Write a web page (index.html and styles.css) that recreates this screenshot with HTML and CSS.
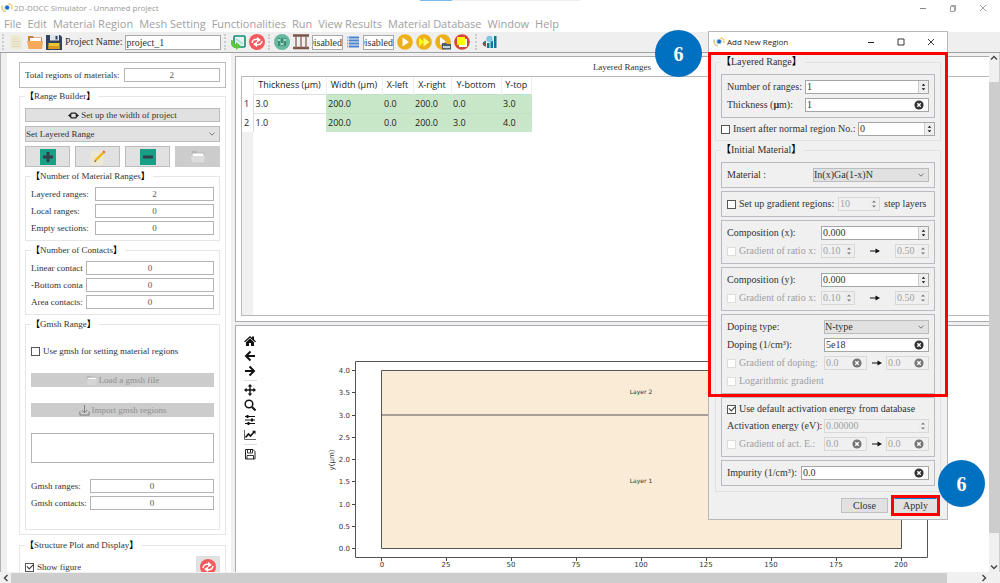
FILE: index.html
```html
<!DOCTYPE html>
<html lang="en">
<head>
<meta charset="utf-8">
<title>2D-DDCC Simulator - Unnamed project</title>
<link rel="stylesheet" href="styles.css">
</head>
<body>
<svg class="defs" aria-hidden="true">
  <symbol id="logo" viewBox="0 0 12 10"><path d="M1.5 2.5Q0 5 2 7.5L5 9" fill="none" stroke="#8fd3a0" stroke-width="1"/><path d="M1 3.5Q.5 6 3.5 8.5" fill="none" stroke="#f6c544" stroke-width="1.4" stroke-dasharray="1.5 .6"/><path d="M7.5 1Q11 1.500 11 4.500L10.500 6" fill="none" stroke="#f6c544" stroke-width="1.400" stroke-dasharray="2 .5"/><circle cx="6" cy="4.500" r="2.600" fill="#7fb6f0"/><circle cx="6.200" cy="4.500" r="1.700" fill="#1763c8"/></symbol>
  <symbol id="steps" viewBox="0 0 10 12"><path d="M3 4.500L5 2.500L7 4.500ZM3 7.500L5 9.500L7 7.500Z" fill="currentColor"/></symbol>
  <symbol id="clear" viewBox="0 0 10 10"><circle cx="5" cy="5" r="4.600" fill="currentColor"/><path d="M3.300 3.300L6.700 6.700M6.700 3.300L3.300 6.700" stroke="#fff" stroke-width="1.300"/></symbol>
  <symbol id="chevron" viewBox="0 0 8 8"><path d="M1.500 2.700L4 5.200L6.500 2.700" fill="none" stroke="#777" stroke-width="1"/></symbol>
  <symbol id="arrow" viewBox="0 0 10 8"><path d="M0 4H7" stroke="#111" stroke-width="1"/><path d="M5.500 1.500L10 4L5.500 6.500Z" fill="#111"/></symbol>
  <symbol id="refresh" viewBox="0 0 16 16"><circle cx="8" cy="8" r="8" fill="#f4595b"/><path d="M3 9Q3.500 4.500 9 5.500M13 7Q12.500 11.500 7 10.500" fill="none" stroke="#fff" stroke-width="1.500"/><path d="M8 2.800L12 6L8 8.500ZM8 13.200L4 10L8 7.500Z" fill="#fff"/></symbol>
</svg>

<header class="titlebar">
  <svg class="logo"><use href="#logo"/></svg>
  <h1>2D-DDCC Simulator - Unnamed project</h1>
  <div class="tab-hint"></div>
  <div class="window-buttons">
    <button aria-label="Minimize"><svg viewBox="0 0 10 10"><path d="M2 5.500H8" stroke="#888"/></svg></button>
    <button aria-label="Restore"><svg viewBox="0 0 10 10"><path d="M2.500 3.500H6.500V8.500H2.500ZM3.500 3V2.500H7.500V7.500H7" fill="none" stroke="#888" stroke-width=".8"/></svg></button>
    <button aria-label="Close window"><svg viewBox="0 0 10 10"><path d="M2 2L8 8M8 2L2 8" stroke="#888" stroke-width=".8"/></svg></button>
  </div>
</header>

<nav class="menu">
  <a href="#">File</a><a href="#">Edit</a><a href="#">Material Region</a><a href="#">Mesh Setting</a><a href="#">Functionalities</a><a href="#">Run</a><a href="#">View Results</a><a href="#">Material Database</a><a href="#">Window</a><a href="#">Help</a>
</nav>

<div class="toolbar">
  <span class="grip"></span>
  <button aria-label="New"><svg viewBox="0 0 16 16"><path d="M2.500 1H11L14 4V15H2.500Z" fill="#eeead2"/><path d="M4 5H10M4 7.500H12M4 10H12M4 12.500H12" stroke="#d9d5bc" stroke-width=".8"/></svg></button>
  <button aria-label="Open"><svg viewBox="0 0 16 16"><path d="M1 2H6L7 3.500H15V9H1Z" fill="#c9813b"/><path d="M3 4H14V8H3Z" fill="#fff"/><path d="M0 7H16L15 15H1.500Z" fill="#f5a95b"/></svg></button>
  <button aria-label="Save"><svg viewBox="0 0 16 16"><path d="M0 1H14L16 3V16H0Z" fill="#33415c"/><path d="M4 1H13V6.500H4Z" fill="#dfe5ea"/><path d="M9.500 2H11.500V5.500H9.500Z" fill="#33415c"/><path d="M2.500 9H13.500V15H2.500Z" fill="#f0c332"/><path d="M2.500 12H13.500V15H2.500Z" fill="#d79b22"/></svg></button>
  <label for="project">Project Name:</label>
  <input id="project" class="project-name" type="text" value="project_1">
  <span class="grip"></span>
  <button aria-label="Import project"><svg viewBox="0 0 16 16"><rect x="4" y="2" width="11" height="11" rx="1" fill="#e4f3ef" stroke="#168d74" stroke-width="1.600"/><path d="M6 5L9 7L13 10" stroke="#a8d6ca" stroke-width="1.500"/><path d="M1 6Q4 6 4 10H6V8L11 12L6 16V14Q0 14 1 6" fill="#5fc93b"/></svg></button>
  <button aria-label="Reload project"><svg><use href="#refresh"/></svg></button>
  <span class="grip"></span>
  <button aria-label="Parameters"><svg viewBox="0 0 16 16"><circle cx="8" cy="8" r="8" fill="#66b99f"/><path d="M5 4V12M8 4V12M11 4V12" stroke="#236b5a" stroke-width="1.200"/><path d="M4 6H6M7 10H9M10 6H12" stroke="#d6f3ea" stroke-width="1.300"/></svg></button>
  <button aria-label="Mesh"><svg viewBox="0 0 16 16"><path d="M0 1.500H16M0 14H16" stroke="#795548" stroke-width="2.400"/><path d="M3 2V14M8 2V14M13 2V14" stroke="#8b6c5e" stroke-width="1.400"/></svg></button>
  <input class="mode" type="text" value="Disabled" aria-label="Mesh mode">
  <button class="list" aria-label="Threads"><svg viewBox="0 0 14 16"><path d="M3 3.500H13M3 6.500H13M3 9.500H13M3 12.500H13" stroke="#4a86d0" stroke-width="2"/><path d="M1 3.500H2.500M1 6.500H2.500M1 9.500H2.500M1 12.500H2.500" stroke="#8fb8ea" stroke-width="2"/></svg></button>
  <input class="mode" type="text" value="Disabled" aria-label="Thread mode">
  <button aria-label="Run"><svg viewBox="0 0 16 16"><circle cx="8" cy="8" r="7.800" fill="#ecb019"/><path d="M5.500 3.500L12 8L5.500 12.500Z" fill="#fff"/></svg></button>
  <button aria-label="Run all"><svg viewBox="0 0 16 16"><circle cx="8" cy="8" r="7.800" fill="#ecb019"/><path d="M3 3.500L8 8L3 12.500Z" fill="#ff0"/><path d="M7.500 3.500L13.500 8L7.500 12.500Z" fill="#fdfd66"/></svg></button>
  <button aria-label="Run from file"><svg viewBox="0 0 16 16"><circle cx="8" cy="8" r="7.800" fill="#ecb019"/><path d="M5 3L11 7.500L5 11Z" fill="#fff"/><path d="M7 9H11L12 10H16V15.500H7Z" fill="#49606b"/><path d="M8 12H15V14H8Z" fill="#c6d7dd"/></svg></button>
  <button aria-label="Stop"><svg viewBox="0 0 16 16"><circle cx="8" cy="8" r="7.800" fill="#d6453b"/><path d="M5 5H13V13H5Z" fill="#fff"/><path d="M3 3H11V11H3Z" fill="#ff0"/></svg></button>
  <span class="grip last"></span>
  <button aria-label="Plot results"><svg viewBox="0 0 16 16"><path d="M6 9H8.500V14H6ZM9.500 7H12V14H9.500ZM13 2H15.500V14H13Z" fill="#0d7896"/><circle cx="8.500" cy="5" r="3.200" fill="#79cbe5"/><path d="M2 8L5 6.500V13L2 11Z" fill="#23869e"/><path d="M2 9L4.500 11.500" stroke="#954d2c" stroke-width="2"/></svg></button>
</div>

<main class="workspace">
  <div class="content">
    <aside class="side">
      <div class="frame total">
        <label for="total">Total regions of materials:</label><input id="total" value="2">
      </div>
      <fieldset class="builder">
        <legend><b>【</b>Range Builder<b>】</b></legend>
        <button class="wide"><svg viewBox="0 0 12 10"><rect x="3" y="2.500" width="6" height="5" rx="1" fill="none" stroke="#222" stroke-width="1.300"/><path d="M0 5L3 2.500V7.500ZM12 5L9 2.500V7.500Z" fill="#222"/></svg>Set up the width of project</button>
        <div class="combo"><select aria-label="Range type"><option>Set Layered Range</option></select><svg><use href="#chevron"/></svg></div>
        <div class="icon-row">
          <button aria-label="Add range"><svg viewBox="0 0 16 16"><path d="M0 0H16V16H0Z" fill="#17a085"/><path d="M8 3V13M3 8H13" stroke="#33404b" stroke-width="3"/></svg></button>
          <button aria-label="Edit range"><svg viewBox="0 0 18 18"><path d="M1 2H15V18H1Z" fill="#ece8d3"/><path d="M5 14.500L6 11L14 3L16 5L8 13Z" fill="#ecb71c"/><path d="M14 3L15.500 1.500L17.500 3.500L16 5Z" fill="#eb6254"/><path d="M5 14.500L5.500 12.500L7 14Z" fill="#444"/></svg></button>
          <button aria-label="Remove range"><svg viewBox="0 0 16 16"><path d="M0 0H16V16H0Z" fill="#17a085"/><path d="M3 8H13" stroke="#33404b" stroke-width="3"/></svg></button>
          <button class="off" aria-label="Load ranges" disabled><svg viewBox="0 0 18 18"><path d="M2 2H7L8 4H16V7H2Z" fill="#b5b5b5"/><path d="M3 5H15V8H3Z" fill="#fff"/><path d="M1 8H17L16 15H2Z" fill="#dcdcdc"/></svg></button>
        </div>
        <div class="groups">
          <fieldset class="ranges">
            <legend><b>【</b>Number of Material Ranges<b>】</b></legend>
            <label for="r1">Layered ranges:</label><input id="r1" value="2">
            <label for="r2">Local ranges:</label><input id="r2" value="0">
            <label for="r3">Empty sections:</label><input id="r3" value="0">
          </fieldset>
          <fieldset class="contacts">
            <legend><b>【</b>Number of Contacts<b>】</b></legend>
            <label for="c1">Linear contact</label><input id="c1" value="0">
            <label for="c2">-Bottom conta</label><input id="c2" value="0">
            <label for="c3">Area contacts:</label><input id="c3" value="0">
          </fieldset>
          <fieldset class="gmsh">
            <legend><b>【</b>Gmsh Range<b>】</b></legend>
            <label class="check"><input type="checkbox">Use gmsh for setting material regions</label>
            <button class="wide off" disabled><svg viewBox="0 0 12 12"><path d="M1 1H5L6 2H11V5H1Z" fill="#b5b5b5"/><path d="M2 3H11V4.500H2Z" fill="#fff"/><path d="M1 4.500H11.500L11 11H1.500Z" fill="#d6d6d6"/></svg>Load a gmsh file</button>
            <button class="wide off" disabled><svg viewBox="0 0 12 12"><path d="M1 7V11H11V7M6 0V8M3 5.500L6 8.500L9 5.500" fill="none" stroke="#777"/></svg>Import gmsh regions</button>
            <textarea aria-label="Gmsh file"></textarea>
            <div class="pairs">
              <label for="g1">Gmsh ranges:</label><input id="g1" value="0">
              <label for="g2">Gmsh contacts:</label><input id="g2" value="0">
            </div>
          </fieldset>
        </div>
      </fieldset>
      <fieldset class="plot-options">
        <legend><b>【</b>Structure Plot and Display<b>】</b></legend>
        <label class="check"><input type="checkbox" checked>Show figure</label>
        <button aria-label="Redraw"><svg><use href="#refresh"/></svg></button>
      </fieldset>
    </aside>

    <div class="views">
      <section class="table-view">
        <h2>Layered Ranges</h2>
        <div class="grid-area">
          <table>
            <thead><tr><th></th><th>Thickness (μm)</th><th>Width (μm)</th><th>X-left</th><th>X-right</th><th>Y-bottom</th><th>Y-top</th></tr></thead>
            <tbody>
              <tr><th>1</th><td class="edit">3.0</td><td>200.0</td><td>0.0</td><td>200.0</td><td>0.0</td><td>3.0</td></tr>
              <tr><th>2</th><td class="edit">1.0</td><td>200.0</td><td>0.0</td><td>200.0</td><td>3.0</td><td>4.0</td></tr>
            </tbody>
          </table>
          <div class="row-gutter"></div>
        </div>
      </section>
      <section class="figure-view">
        <div class="figure-tools">
          <button aria-label="Home"><svg viewBox="0 0 12 12"><path d="M0 6.500L6 1L8 2.800V1.500H10V4.600L12 6.500L11 7.300L6 2.800L1 7.300Z" fill="#111"/><path d="M2 7.200L6 3.600L10 7.200V11H7V8H5V11H2Z" fill="#111"/></svg></button>
          <button aria-label="Back"><svg viewBox="0 0 12 12"><path d="M11 6H2M6.500 1.500L2 6L6.500 10.500" fill="none" stroke="#111" stroke-width="2"/></svg></button>
          <button aria-label="Forward"><svg viewBox="0 0 12 12"><path d="M1 6H10M5.500 1.500L10 6L5.500 10.500" fill="none" stroke="#111" stroke-width="2"/></svg></button>
          <hr>
          <button aria-label="Pan"><svg viewBox="0 0 12 12"><path d="M6 1V11M1 6H11" stroke="#111" stroke-width="1.400"/><path d="M6 0L8.300 2.600H3.700ZM6 12L8.300 9.400H3.700ZM0 6L2.600 3.700V8.300ZM12 6L9.400 3.700V8.300Z" fill="#111"/></svg></button>
          <button aria-label="Zoom"><svg viewBox="0 0 12 12"><circle cx="5" cy="5" r="3.800" fill="none" stroke="#111" stroke-width="1.500"/><path d="M8 8L11.500 11.500" stroke="#111" stroke-width="2"/></svg></button>
          <button aria-label="Subplots"><svg viewBox="0 0 12 12"><path d="M1 2.500H11M1 6H11M1 9.500H11" stroke="#111"/><path d="M3.500 1V4M8 4.500V7.500M4.500 8V11" stroke="#111" stroke-width="2"/></svg></button>
          <button aria-label="Axes"><svg viewBox="0 0 12 12"><path d="M.5 1V10.500H12" fill="none" stroke="#666" stroke-width="1"/><path d="M1.500 8.500L4.500 5L6.500 7L10 3" fill="none" stroke="#111" stroke-width="1.600"/><path d="M8 1.800H11.500V5.300Z" fill="#111"/></svg></button>
          <hr>
          <button aria-label="Save figure"><svg viewBox="0 0 12 12"><path d="M1.500 1.500H9L11 3.500V11H1.500Z" fill="none" stroke="#222"/><path d="M3.500 1.500V5H8.500V1.500M3 11V7.500H9.500V11" fill="none" stroke="#222" stroke-width=".9"/><path d="M6.500 2V4.500" stroke="#222"/></svg></button>
        </div>
        <svg class="chart" viewBox="0 0 660 247" role="img" aria-label="Layer structure">
          <g transform="translate(-320 -326)">
            <path d="M355.500 361.500H927.500V557.500H355.500Z" fill="#fff" stroke="#555"/>
            <path d="M381.500 370.500H901.500V548.500H381.500Z" fill="#faebd7" stroke="#555"/>
            <path d="M381.500 415H901.500" stroke="#555"/>
            <path d="M352 370.500H355M352 392.500H355M352 415.500H355M352 437.500H355M352 459.500H355M352 481.500H355M352 504.500H355M352 526.500H355M352 548.500H355M381.500 558V561M446.500 558V561M511.500 558V561M576.500 558V561M641.500 558V561M706.500 558V561M771.500 558V561M836.500 558V561M901.500 558V561" stroke="#444"/>
            <g class="ticks-y"><text x="350" y="373">4.0</text><text x="350" y="395">3.5</text><text x="350" y="418">3.0</text><text x="350" y="440">2.5</text><text x="350" y="462">2.0</text><text x="350" y="484">1.5</text><text x="350" y="507">1.0</text><text x="350" y="529">0.5</text><text x="350" y="551">0.0</text></g>
            <g class="ticks-x"><text x="382" y="567">0</text><text x="446" y="567">25</text><text x="511" y="567">50</text><text x="576" y="567">75</text><text x="641" y="567">100</text><text x="706" y="567">125</text><text x="771" y="567">150</text><text x="836" y="567">175</text><text x="901" y="567">200</text><text transform="translate(334 460) rotate(-90)">y(μm)</text></g>
            <g class="names"><text x="641" y="394">Layer 2</text><text x="641" y="483">Layer 1</text></g>
          </g>
        </svg>
      </section>
    </div>
    <div class="vscroll"><svg viewBox="0 0 10 10"><path d="M2 6.500L5 3.500L8 6.500" fill="none" stroke="#444" stroke-width="1.400"/></svg><div class="vtrack"><span></span></div><svg viewBox="0 0 10 10"><path d="M2 3.500L5 6.500L8 3.500" fill="none" stroke="#444" stroke-width="1.400"/></svg></div>
  </div>
  <div class="hscroll"><svg viewBox="0 0 10 10"><path d="M6.500 2L3.500 5L6.500 8" fill="none" stroke="#444" stroke-width="1.400"/></svg><div class="htrack"><span></span></div><svg viewBox="0 0 10 10"><path d="M3.500 2L6.500 5L3.500 8" fill="none" stroke="#444" stroke-width="1.400"/></svg></div>
</main>

<div class="dialog" role="dialog" aria-labelledby="dialog-title">
  <header class="dialog-title">
    <svg class="logo"><use href="#logo"/></svg>
    <h2 id="dialog-title">Add New Region</h2>
    <div class="window-buttons">
      <button aria-label="Minimize dialog"><svg viewBox="0 0 10 10"><path d="M2 5.500H8" stroke="#222"/></svg></button>
      <button aria-label="Maximize dialog"><svg viewBox="0 0 10 10"><path d="M2 2H8V8H2Z" fill="none" stroke="#222" stroke-width=".9"/></svg></button>
      <button aria-label="Close dialog"><svg viewBox="0 0 10 10"><path d="M2 2L8 8M8 2L2 8" stroke="#222" stroke-width=".9"/></svg></button>
    </div>
  </header>
  <form class="dialog-body">
    <fieldset>
      <legend><b>【</b>Layered Range<b>】</b></legend>
      <div class="box short">
        <div class="row"><label for="n">Number of ranges:</label><span class="field"><input id="n" value="1"><svg class="steps"><use href="#steps"/></svg></span></div>
        <div class="row"><label for="t">Thickness (<b>μ</b>m):</label><span class="field"><input id="t" value="1"><svg class="clear"><use href="#clear"/></svg></span></div>
      </div>
      <div class="row insert"><label class="check"><input type="checkbox">Insert after normal region No.:</label><span class="field"><input value="0" aria-label="Region number"><svg class="steps"><use href="#steps"/></svg></span></div>
    </fieldset>
    <fieldset class="initial">
      <legend><b>【</b>Initial Material<b>】</b></legend>
      <div class="box material"><div class="row"><label for="mat">Material :</label><span class="combo"><select id="mat"><option>In(x)Ga(1-x)N</option></select><svg><use href="#chevron"/></svg></span></div></div>
      <div class="box gradient"><div class="row"><label class="check"><input type="checkbox">Set up gradient regions:</label><span class="field dim"><input value="10" aria-label="Steps" disabled><svg class="steps"><use href="#steps"/></svg></span><span>step layers</span></div></div>
      <div class="box ratio">
        <div class="row"><label for="cx">Composition (x):</label><span class="field"><input id="cx" value="0.000"><svg class="steps"><use href="#steps"/></svg></span></div>
        <div class="row"><label class="check dim"><input type="checkbox" disabled>Gradient of ratio x:</label><div class="span"><span class="field dim"><input value="0.10" aria-label="x from" disabled><svg class="steps"><use href="#steps"/></svg></span><svg class="arrow"><use href="#arrow"/></svg><span class="field dim"><input value="0.50" aria-label="x to" disabled><svg class="steps"><use href="#steps"/></svg></span></div></div>
      </div>
      <div class="box ratio">
        <div class="row"><label for="cy">Composition (y):</label><span class="field"><input id="cy" value="0.000"><svg class="steps"><use href="#steps"/></svg></span></div>
        <div class="row"><label class="check dim"><input type="checkbox" disabled>Gradient of ratio x:</label><div class="span"><span class="field dim"><input value="0.10" aria-label="y from" disabled><svg class="steps"><use href="#steps"/></svg></span><svg class="arrow"><use href="#arrow"/></svg><span class="field dim"><input value="0.50" aria-label="y to" disabled><svg class="steps"><use href="#steps"/></svg></span></div></div>
      </div>
      <div class="box doping">
        <div class="row"><label for="dt">Doping type:</label><span class="combo"><select id="dt"><option>N-type</option></select><svg><use href="#chevron"/></svg></span></div>
        <div class="row"><label for="dv">Doping (1/cm³):</label><span class="field"><input id="dv" value="5e18"><svg class="clear"><use href="#clear"/></svg></span></div>
        <div class="row"><label class="check dim"><input type="checkbox" disabled>Gradient of doping:</label><div class="span"><span class="field dim"><input value="0.0" aria-label="Doping from" disabled><svg class="clear"><use href="#clear"/></svg></span><svg class="arrow"><use href="#arrow"/></svg><span class="field dim"><input value="0.0" aria-label="Doping to" disabled><svg class="clear"><use href="#clear"/></svg></span></div></div>
        <label class="check dim tall"><input type="checkbox" disabled>Logarithmic gradient</label>
      </div>
      <div class="box doping">
        <label class="check"><input type="checkbox" checked>Use default activation energy from database</label>
        <div class="row"><label for="ae">Activation energy (eV):</label><span class="field dim"><input id="ae" value="0.00000" disabled><svg class="steps"><use href="#steps"/></svg></span></div>
        <div class="row"><label class="check dim"><input type="checkbox" disabled>Gradient of act. E.:</label><div class="span"><span class="field dim"><input value="0.0" aria-label="Energy from" disabled><svg class="clear"><use href="#clear"/></svg></span><svg class="arrow"><use href="#arrow"/></svg><span class="field dim"><input value="0.0" aria-label="Energy to" disabled><svg class="clear"><use href="#clear"/></svg></span></div></div>
      </div>
      <div class="box impurity"><div class="row"><label for="im">Impurity (1/cm³):</label><span class="field"><input id="im" value="0.0"><svg class="clear"><use href="#clear"/></svg></span></div></div>
    </fieldset>
    <div class="actions"><button type="button">Close</button><span class="apply"><button type="button">Apply</button><b class="step">6</b></span></div>
  </form>
  <div class="highlight"></div>
  <b class="step first">6</b>
</div>
</body>
</html>
```
FILE: styles.css
```css
* { box-sizing: border-box; }
body { margin: 0; height: 100vh; overflow: hidden; display: flex; flex-direction: column; background: #fff; color: #333; font: 9px/12px "Liberation Serif", "Noto Sans CJK TC", serif; position: relative; }
button, input, select, textarea { font: inherit; color: inherit; margin: 0; padding: 0; border-radius: 0; min-width: 0; }
h1, h2 { margin: 0; font: inherit; }
svg { display: block; flex: none; }
.defs { position: absolute; width: 0; height: 0; }
.logo { width: 12px; height: 10px; }

.titlebar { height: 15px; flex: none; display: flex; align-items: center; padding-left: 1px; gap: 1px; color: #999; font-family: "Open Sans", sans-serif; font-size: 8px; position: relative; }
.tab-hint { position: absolute; left: 42%; top: 0; width: 16%; height: 1px; background: linear-gradient(90deg, #7db8ea 20%, #eee 20%); }
.window-buttons { margin-left: auto; display: flex; gap: 20px; padding-right: 12px; }
.window-buttons button { border: 0; background: none; width: 10px; height: 10px; }
.window-buttons svg { width: 10px; height: 10px; }

.menu { height: 17px; flex: none; display: flex; align-items: center; gap: 6px; padding-left: 4px; font: 11px/16px "Open Sans", sans-serif; }
.menu a { color: #a0a0a0; text-decoration: none; white-space: nowrap; }

.toolbar { height: 21px; flex: none; display: flex; align-items: center; gap: 3px; padding-left: 2px; background: #efefef; border-bottom: 1px solid #a0a0a6; font-size: 10px; }
.toolbar button { border: 0; background: none; width: 16px; height: 16px; flex: none; }
.toolbar button svg { width: 16px; height: 16px; }
.toolbar .list, .toolbar .list svg { width: 14px; }
.toolbar input { border: 1px solid #a8a8a8; background: #fff; height: 15px; flex: none; }
.toolbar label { white-space: nowrap; }
.project-name { width: 96px; }
.toolbar .mode { width: 31px; text-indent: -7px; }
.grip { width: 3px; height: 16px; border-left: 2px dotted #ccc; flex: none; }
.grip.last { margin-left: 2px; }

.workspace { flex: 1; min-height: 0; display: flex; flex-direction: column; background: #f0f0f0; }
.content { flex: 1; min-height: 0; display: flex; border-left: 1px solid #b4b4b4; }
.side { width: 224px; flex: none; margin-left: 6px; padding: 9px 5px 0 12px; background: #fff; overflow: hidden; display: flex; flex-direction: column; }
.side > * { flex: none; }
.frame { border: 1px solid #bbb; }
.total { display: flex; align-items: center; gap: 4px; padding: 5px; margin-bottom: 2px; }
.total input { flex: 1; }
fieldset { margin: 0; min-width: 0; border: 1px solid #e6e6e6; padding: 6px 5px 4px; }
legend { padding: 0 3px 0 0; line-height: 12px; height: 12px; white-space: nowrap; }
legend b { color: #000; }
.side input:not([type=checkbox]) { height: 14px; border: 1px solid #b4b4b4; background: #fff; text-align: center; color: #555; width: 100%; }
.side label { white-space: nowrap; overflow: hidden; }
.side button { border: 1px solid #bcbcbc; background: #e1e1e1; display: flex; align-items: center; justify-content: center; }
.side button.off { background: #ccc; border-color: #ccc; color: #909090; }
.wide { width: 100%; height: 14px; gap: 2px; }
.wide svg { width: 11px; height: 11px; }
.combo { display: grid; grid-template-columns: 1fr 12px; align-items: center; }
.combo select { grid-area: 1 / 1 / 2 / 3; appearance: none; width: 100%; height: 14px; border: 1px solid #bcbcbc; background: #e1e1e1; }
.combo svg { grid-area: 1 / 2; width: 8px; height: 8px; pointer-events: none; }
.builder > .combo { margin: 4px 0; }
.builder > .combo select { height: 16px; }
.icon-row { display: grid; grid-template-columns: repeat(4, 1fr); gap: 5px; }
.icon-row button { height: 21px; }
.icon-row svg { width: 16px; height: 16px; }
.groups { display: grid; gap: 3px; margin-top: 3px; }
.groups fieldset { padding: 5px; display: grid; gap: 3px 0; align-items: center; }
.groups .ranges { grid-template-columns: 64px 1fr; }
.groups .contacts { grid-template-columns: 55px 1fr; }
.contacts label { padding-right: 3px; }
.groups .gmsh { gap: 16px; padding: 15px 5px 19px; }
.pairs { display: grid; grid-template-columns: 59px 1fr; gap: 3px 0; align-items: center; }
textarea { display: block; width: 100%; height: 30px; border: 1px solid #b4b4b4; resize: none; }
.check { display: flex; align-items: center; gap: 3px; white-space: nowrap; line-height: 12px; }
.check input { appearance: none; width: 9px; height: 9px; flex: none; border: 1px solid #555; background: #fff; display: grid; place-items: center; }
.check input:checked::after { content: ""; width: 5px; height: 3px; border: solid #333; border-width: 0 0 1px 1px; transform: translateY(-1px) rotate(-45deg); }
.plot-options { margin-top: 4px; display: flex; justify-content: space-between; align-items: center; height: 60px; padding-top: 5px; }
.plot-options .check { align-self: flex-start; padding-top: 5px; }
.plot-options button { align-self: flex-start; width: 24px; height: 22px; border-color: #ddd; }
.plot-options svg { width: 16px; height: 16px; }

.views { flex: 1; min-width: 0; margin-left: 4px; padding-top: 3px; display: grid; grid-template-rows: minmax(0, 266fr) minmax(0, 247fr); gap: 3px; }
.table-view { min-height: 0; border: 1px solid #aaabb0; border-right: 0; background: #fff; padding: 0 0 5px 5px; display: flex; flex-direction: column; }
.table-view h2 { text-align: center; height: 19px; line-height: 21px; padding-left: 14px; }
.grid-area { flex: 1; border: 1px solid #b9b9b9; border-right: 0; display: flex; flex-direction: column; align-items: flex-start; }
table { border-collapse: collapse; font: 9px/12px "Open Sans", sans-serif; color: #222; table-layout: fixed; width: 290px; }
th, td { padding: 0; font-weight: 400; text-align: left; height: 19px; padding-left: 2px; white-space: nowrap; }
thead th { height: 17px; border-right: 1px solid #eee; text-align: center; padding: 0; }
thead th:nth-child(1) { width: 11px; }
thead th:nth-child(2) { width: 73px; }
thead th:nth-child(3) { width: 56px; }
thead th:nth-child(4) { width: 31px; }
thead th:nth-child(5) { width: 38px; }
thead th:nth-child(6) { width: 50px; }
tbody th { border-right: 1px solid #ddd; }
td { background: #c8e6c8; border-top: 1px solid #c1dfc4; }
.edit { background: #fff; border-color: #ddd; }
.row-gutter { flex: 1; width: 11px; background: #f0f0f0; }

.figure-view { min-height: 0; border: 1px solid #aaabb0; border-width: 1px 0 0 1px; background: #fff; display: flex; overflow: hidden; }
.figure-tools { width: 84px; padding: 9px 0 0 8px; display: flex; flex-direction: column; gap: 3px; flex: none; }
.figure-tools button { border: 0; background: none; width: 12px; height: 12px; }
.figure-tools svg { width: 12px; height: 12px; }
.figure-tools hr { width: 13px; margin: 0; border: 0; border-top: 1px solid #ddd; }
.chart { width: 660px; height: 247px; font: 7px "DejaVu Sans", sans-serif; fill: #333; }
.ticks-y { text-anchor: end; }
.ticks-x, .names { text-anchor: middle; }
.names { font-size: 6px; }

.vscroll { width: 11px; flex: none; display: flex; flex-direction: column; border-right: 1px solid #ccc; }
.vscroll svg, .hscroll svg { width: 10px; height: 10px; }
.vtrack { flex: 1; padding: 19px 0 29px; display: flex; }
.vtrack span, .htrack span { flex: 1; background: #cdcdcd; }
.hscroll { height: 11px; flex: none; display: flex; align-items: center; padding: 0 11px 0 1px; }
.htrack { flex: 1; height: 10px; display: flex; padding-right: 32px; }

.dialog { position: absolute; left: 708px; top: 31px; width: 240px; background: #f0f0f0; border: 1px solid #b8b8b8; font-size: 10px; color: #333; }
.dialog-title { height: 20px; background: #fff; display: flex; align-items: center; padding-left: 4px; gap: 2px; font-family: "Open Sans", sans-serif; font-size: 8px; color: #222; }
.dialog-title .window-buttons { padding-right: 11px; }
.dialog-body { padding: 4px 6px 6px; display: grid; gap: 3px; }
.dialog-body fieldset { border-color: #e0e0e0; display: grid; gap: 4px; }
.dialog-body .initial { gap: 3px; padding-bottom: 5px; }
.box { border: 1px solid #b9bac2; padding: 5px; display: grid; gap: 4px; }
.row { display: grid; grid-template-columns: 94px 1fr; align-items: center; height: 14px; white-space: nowrap; }
.short .row { grid-template-columns: 78px 1fr; }
.row.insert { grid-template-columns: 137px 1fr; }
.material .row { grid-template-columns: 86px 1fr; }
.gradient .row { grid-template-columns: 111px 42px 1fr; }
.gradient .row > :last-child { padding-left: 4px; }
.doping .row { grid-template-columns: 97px 1fr; }
.impurity .row { grid-template-columns: 74px 1fr; }
.field { display: flex; height: 14px; border: 1px solid #a6a6a6; background: #fff; align-items: center; }
.field input { flex: 1; width: 0; border: 0; background: none; height: 12px; padding-left: 1px; }
.field.dim { background: #f0f0f0; border-color: #d8d8d8; color: #a0a0a0; }
.steps { width: 10px; height: 12px; background: #eee; border-left: 1px solid #ccc; color: #111; }
.clear { width: 10px; height: 10px; margin-right: 4px; color: #333; }
.dim .steps { border: 0; color: #777; }
.dim .clear { color: #777; }
.span { display: grid; grid-template-columns: 34px 1fr 34px; justify-items: center; align-items: center; }
.span .field { width: 100%; }
.doping .span { grid-template-columns: 43px 1fr 43px; }
.arrow { width: 10px; height: 8px; }
.check.dim { color: #a0a0a0; }
.check.dim input { border-color: #ddd; }
.tall { height: 14px; }
.actions { display: flex; justify-content: flex-end; gap: 6px; padding: 3px 4px 0 0; }
.actions button { width: 47px; height: 15px; border: 1px solid #c0c0c0; background: #e1e1e1; display: block; }
.apply { position: relative; outline: 3px solid #f00; }
.apply button { width: 43px; border-color: #0078d7 #e1e1e1 #e1e1e1; }
.step { position: absolute; left: 44px; top: -38px; width: 47px; height: 47px; border-radius: 50%; background: #0070c0; color: #fff; font-size: 20px; line-height: 49px; text-align: center; }
.step.first { left: -54px; top: -2px; }
.highlight { position: absolute; left: -1px; right: -1px; top: 20px; height: 345px; border: 3px solid #f00; pointer-events: none; }
```
